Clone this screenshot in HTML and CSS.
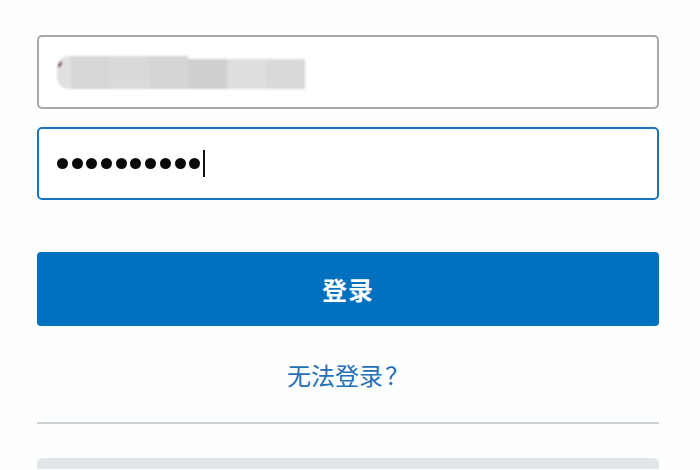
FILE: index.html
```html
<!DOCTYPE html>
<html lang="zh">
<head>
<meta charset="utf-8">
<link rel="stylesheet" href="styles.css">
</head>
<body>
<div class="form">
  <div class="field field-user">
    <div class="blur">
      <span class="mark"></span>
      <span class="b b1"></span><span class="b b2"></span><span class="b b3"></span><span class="b b4"></span><span class="b b5"></span><span class="b b6"></span><span class="b b7"></span>
    </div>
  </div>
  <div class="field field-pass">
    <span class="dots">
      <span class="dot"></span><span class="dot"></span><span class="dot"></span><span class="dot"></span><span class="dot"></span><span class="dot"></span><span class="dot"></span><span class="dot"></span><span class="dot"></span><span class="dot"></span>
    </span>
    <span class="caret"></span>
  </div>
  <div class="btn">登录</div>
  <div class="link">无法登录<span class="q">？</span></div>
  <div class="divider"></div>
  <div class="alt"></div>
</div>
</body>
</html>
```

FILE: styles.css
```css
html, body {
  margin: 0;
  padding: 0;
  background: #fdfefe;
  font-family: "Noto Sans CJK SC", "Noto Sans", sans-serif;
  overflow: hidden;
  height: 470px;
}
.form {
  width: 622px;
  margin: 0 0 0 37px;
  padding-top: 35px;
  display: flex;
  flex-direction: column;
}
.field {
  box-sizing: border-box;
  height: 74px;
  border-radius: 5px;
  background: #fff;
  display: flex;
  align-items: center;
  padding-left: 18px;
}
.field-user {
  border: 2px solid #a9a9a9;
}
.field-pass {
  margin-top: 18px;
  height: 73px;
  border: 2px solid #1c74bf;
}
.blur {
  display: flex;
  align-items: flex-start;
  height: 34px;
  position: relative;
  margin-top: 2px;
  filter: blur(1px);
}
.mark {
  position: absolute;
  left: 2px;
  top: 6px;
  width: 2px;
  height: 5px;
  background: #6a2a2a;
  transform: rotate(30deg);
}
.b {
  display: block;
  height: 33px;
  width: 39px;
}
.b1 { width: 14px; background: #e0e0e0; border-radius: 12px 0 0 12px; }
.b2 { background: #d7d7d7; }
.b3 { background: #dadada; }
.b4 { background: #d5d5d5; }
.b5 { background: #cfcfcf; height: 30px; margin-top: 3px; }
.b6 { background: #dedede; height: 30px; margin-top: 3px; }
.b7 { background: #d9d9d9; height: 30px; margin-top: 3px; }
.dots {
  display: flex;
  gap: 3.7px;
}
.dot {
  width: 11px;
  height: 11px;
  border-radius: 50%;
  background: #0a0a0a;
}
.caret {
  width: 2px;
  height: 27px;
  background: #111;
  margin-left: 3px;
}
.btn {
  margin-top: 52px;
  height: 74px;
  border-radius: 4px;
  background: #0070bf;
  color: #fff;
  font-size: 25px;
  font-weight: 700;
  display: flex;
  align-items: center;
  justify-content: center;
  letter-spacing: 1px;
}
.link {
  margin-top: 32px;
  text-align: center;
  font-size: 24px;
  line-height: 34px;
  color: #2470b6;
}
.q {
  display: inline-block;
  width: 26px;
  text-align: right;
}
.divider {
  margin-top: 30px;
  height: 2px;
  background: #cfd2d3;
}
.alt {
  margin-top: 34px;
  height: 11px;
  background: #e2e6e9;
  border-radius: 6px 6px 0 0;
}
```
